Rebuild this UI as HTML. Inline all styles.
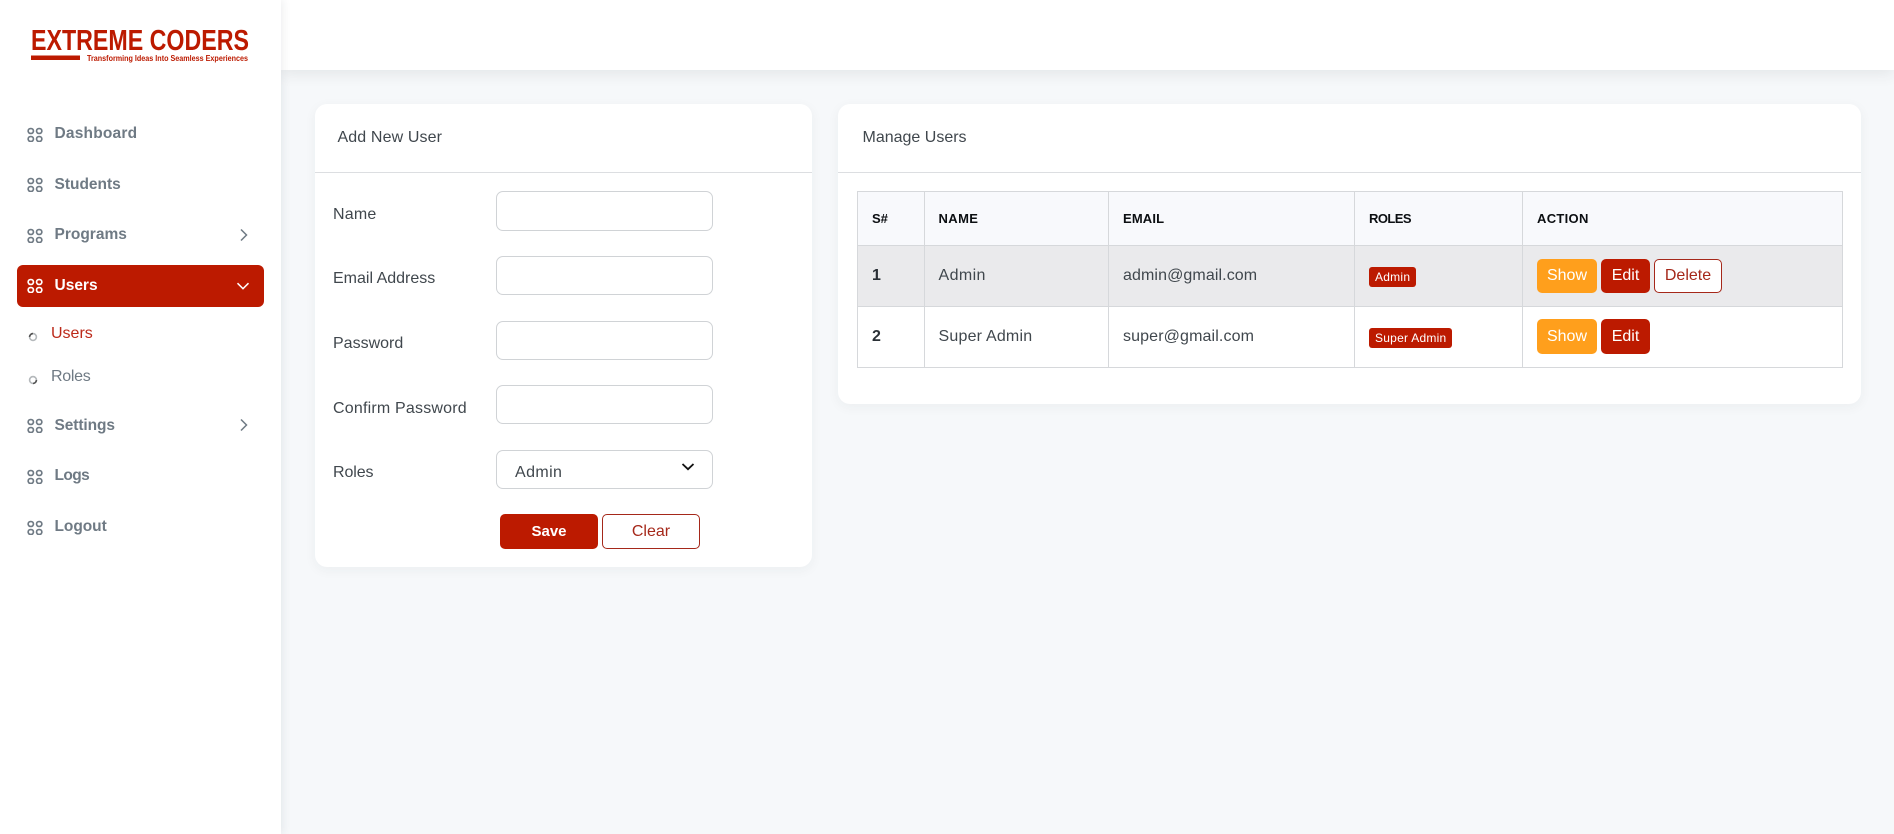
<!DOCTYPE html>
<html lang="en">
<head>
<meta charset="utf-8">
<title>Manage Users</title>
<style>
*{box-sizing:border-box}
html,body{margin:0;padding:0}
body{width:1894px;height:834px;overflow:hidden;position:relative;background:#f6f8fa;font-family:"Liberation Sans",sans-serif;font-size:16px;color:#40474d}
.abs{position:absolute}
.side{position:absolute;left:0;top:0;width:281px;height:834px;background:#fff;box-shadow:2px 0 8px rgba(40,50,60,.08);z-index:3}
.top{position:absolute;left:281px;top:0;width:1613px;height:70px;background:#fff;box-shadow:0 4px 14px rgba(40,50,60,.09);z-index:2}
.nav{position:absolute;left:54.5px;line-height:20px;font-weight:700;font-size:15.5px;color:#6f7a84;white-space:nowrap}
.ic{position:absolute;left:27px;width:16px;height:15px;color:#6f7a84}
.act{position:absolute;left:17px;top:265px;width:247px;height:42px;border-radius:6px;background:#bc1a00}
.sub{position:absolute;left:51px;line-height:20px;white-space:nowrap;color:#6f7a84}
.card{position:absolute;background:#fff;border-radius:12px;box-shadow:0 3px 12px rgba(40,50,60,.05)}
.ch{position:absolute;left:0;right:0;top:0;height:69px;border-bottom:1px solid #dcdee1}
.lbl{position:absolute;left:333px;line-height:20px;white-space:nowrap;z-index:1}
.inp{position:absolute;left:496px;width:217px;border:1px solid #d0d3d6;border-radius:7px;background:#fff;z-index:1;font:16px "Liberation Sans",sans-serif;padding:0;margin:0}
.btn{display:block;border-radius:5px;border:1px solid #bc1a00;background:#bc1a00;color:#fff;text-align:center;font:16px/1 "Liberation Sans",sans-serif;padding:0;margin:0}
.out{background:#fff;color:#a5281a;border-color:#a5281a}
.org{background:#ff9f1c;border-color:#ff9f1c}
table{position:absolute;left:857px;top:191px;width:985px;border-collapse:collapse;table-layout:fixed;z-index:1}
th,td{border:1px solid #d6d8db;padding:0 0 0 14px;text-align:left;vertical-align:middle;white-space:nowrap}
th{background:#f8f9fc;color:#0c0f12;font-size:13px;font-weight:700;height:54px}
td{height:61px}
.shade td{background:#eaeaec}
.num{font-weight:700;color:#2a3036}
.bdg{display:inline-block;background:#bc1a00;color:#fff;border-radius:3px;font-size:12px;line-height:20px;height:20px;padding:0 6px;vertical-align:middle;letter-spacing:.25px;position:relative;top:1px}
.acts{display:flex;gap:4px;align-items:center}
</style>
</head>
<body>

<svg width="0" height="0" style="position:absolute">
<symbol id="grid" viewBox="0 0 16 15">
<g fill="none" stroke="currentColor" stroke-width="1.7">
<rect x="1.15" y="1.55" width="5.3" height="4.9" rx="2.4"/>
<rect x="9.55" y="1.55" width="5.3" height="4.9" rx="2.4"/>
<rect x="1.15" y="9.55" width="5.3" height="4.9" rx="2.4"/>
<rect x="9.55" y="9.55" width="5.3" height="4.9" rx="2.4"/>
</g>
</symbol>
</svg>

<div class="top"></div>

<aside class="side">
  <svg class="abs" style="left:28px;top:24px" width="226" height="42" viewBox="0 0 226 42">
    <text x="3" y="26" font-family="Liberation Sans" font-weight="700" font-size="29" fill="#bc1a00" textLength="218" lengthAdjust="spacingAndGlyphs">EXTREME CODERS</text>
    <rect x="3" y="31.5" width="49" height="4.5" fill="#bc1a00"/>
    <text x="59" y="37" font-family="Liberation Sans" font-weight="700" font-size="8.4" fill="#bc1a00" textLength="161" lengthAdjust="spacingAndGlyphs">Transforming Ideas Into Seamless Experiences</text>
  </svg>

  <svg class="ic" style="top:127px"><use href="#grid"/></svg>
  <div class="nav" style="top:124px;letter-spacing:.2px">Dashboard</div>
  <svg class="ic" style="top:177px"><use href="#grid"/></svg>
  <div class="nav" style="top:175px">Students</div>
  <svg class="ic" style="top:228px"><use href="#grid"/></svg>
  <div class="nav" style="top:225px">Programs</div>
  <svg class="abs" style="left:238px;top:228px" width="12" height="14" viewBox="0 0 12 14"><path d="M3 1.5 8.5 7 3 12.5" fill="none" stroke="#6f7a84" stroke-width="1.5"/></svg>

  <div class="act"></div>
  <svg class="ic" style="top:278px;color:#fff"><use href="#grid"/></svg>
  <div class="nav" style="top:276px;color:#fff">Users</div>
  <svg class="abs" style="left:236px;top:281px" width="14" height="10" viewBox="0 0 14 10"><path d="M1.5 2.2 7 7.7 12.5 2.2" fill="none" stroke="#fff" stroke-width="1.5"/></svg>

  <svg class="abs" style="left:28px;top:332px" width="10" height="10" viewBox="0 0 10 10"><circle cx="5" cy="5" r="3.4" fill="none" stroke="#b4b8bb" stroke-width="1.6"/><path d="M1.6 5A3.4 3.4 0 0 1 5 1.6" fill="none" stroke="#555" stroke-width="1.6"/></svg>
  <div class="sub" style="top:324px;color:#bc2a1a">Users</div>
  <svg class="abs" style="left:28px;top:375px" width="10" height="10" viewBox="0 0 10 10"><circle cx="5" cy="5" r="3.4" fill="none" stroke="#b4b8bb" stroke-width="1.6"/><path d="M8.4 5A3.4 3.4 0 0 1 5 8.4" fill="none" stroke="#555" stroke-width="1.6"/></svg>
  <div class="sub" style="top:367px;letter-spacing:-.3px">Roles</div>

  <svg class="ic" style="top:418px"><use href="#grid"/></svg>
  <div class="nav" style="top:416px;letter-spacing:-.1px">Settings</div>
  <svg class="abs" style="left:238px;top:418px" width="12" height="14" viewBox="0 0 12 14"><path d="M3 1.5 8.5 7 3 12.5" fill="none" stroke="#6f7a84" stroke-width="1.5"/></svg>
  <svg class="ic" style="top:469px"><use href="#grid"/></svg>
  <div class="nav" style="top:466px;letter-spacing:-.6px">Logs</div>
  <svg class="ic" style="top:520px"><use href="#grid"/></svg>
  <div class="nav" style="top:517px;letter-spacing:-.05px">Logout</div>
</aside>

<section class="card" style="left:315px;top:104px;width:497px;height:463px">
  <div class="ch"></div>
  <div class="abs" style="left:22.5px;top:24px;line-height:20px;letter-spacing:.12px;white-space:nowrap">Add New User</div>
</section>

<div class="lbl" style="top:205px;letter-spacing:.2px">Name</div>
<input class="inp" style="top:191px;height:40px" type="text" aria-label="Name">
<div class="lbl" style="top:269px">Email Address</div>
<input class="inp" style="top:256px;height:39px" type="text" aria-label="Email Address">
<div class="lbl" style="top:334px">Password</div>
<input class="inp" style="top:321px;height:39px" type="password" aria-label="Password">
<div class="lbl" style="top:399px;letter-spacing:.2px">Confirm Password</div>
<input class="inp" style="top:385px;height:39px" type="password" aria-label="Confirm Password">
<div class="lbl" style="top:463px;letter-spacing:-.1px">Roles</div>
<div class="inp" style="top:450px;height:39px"></div>
<div class="abs" style="left:515px;top:463px;line-height:20px;z-index:1;letter-spacing:.4px">Admin</div>
<svg class="abs" style="left:681px;top:461px;z-index:1" width="14" height="11" viewBox="0 0 14 11"><path d="M1.5 3 7 8.2 12.5 3" fill="none" stroke="#111" stroke-width="1.8"/></svg>
<button class="btn abs" style="left:500px;top:514px;width:98px;height:35px;z-index:1;font-weight:700;font-size:15px">Save</button>
<button class="btn out abs" style="left:602px;top:514px;width:98px;height:35px;z-index:1">Clear</button>

<section class="card" style="left:838px;top:104px;width:1023px;height:300px">
  <div class="ch"></div>
  <div class="abs" style="left:24.5px;top:24px;line-height:20px;white-space:nowrap">Manage Users</div>
</section>

<table>
  <colgroup><col style="width:67px"><col style="width:184px"><col style="width:246px"><col style="width:168px"><col style="width:320px"></colgroup>
  <thead>
    <tr><th>S#</th><th style="letter-spacing:.4px;padding-left:13.5px">NAME</th><th style="letter-spacing:.15px">EMAIL</th><th style="letter-spacing:-.55px">ROLES</th><th style="letter-spacing:.3px">ACTION</th></tr>
  </thead>
  <tbody>
    <tr class="shade">
      <td class="num">1</td>
      <td style="letter-spacing:.4px;padding-left:13.5px">Admin</td>
      <td style="letter-spacing:.1px">admin@gmail.com</td>
      <td><span class="bdg">Admin</span></td>
      <td><div class="acts">
        <button class="btn org" style="width:60px;height:34px">Show</button>
        <button class="btn" style="width:49px;height:34px">Edit</button>
        <button class="btn out" style="width:68px;height:34px">Delete</button>
      </div></td>
    </tr>
    <tr>
      <td class="num">2</td>
      <td style="letter-spacing:.2px;padding-left:13.5px">Super Admin</td>
      <td style="letter-spacing:.13px">super@gmail.com</td>
      <td><span class="bdg">Super Admin</span></td>
      <td><div class="acts" style="position:relative;top:-1px">
        <button class="btn org" style="width:60px;height:35px;padding-top:2px">Show</button>
        <button class="btn" style="width:49px;height:35px;padding-top:2px">Edit</button>
      </div></td>
    </tr>
  </tbody>
</table>

</body>
</html>
